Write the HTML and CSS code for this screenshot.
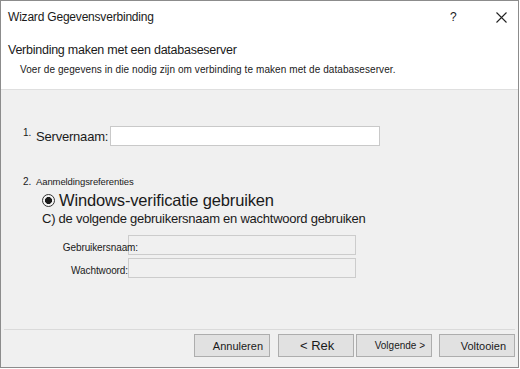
FILE: index.html
```html
<!DOCTYPE html>
<html lang="nl">
<head>
    <meta charset="UTF-8">
    <title>Wizard Gegevensverbinding</title>
    <link rel="stylesheet" href="styles.css">
</head>
<body>
    <div class="dialog">
        <div class="titlebar">
            <span class="title">Wizard Gegevensverbinding</span>
            <span class="help">?</span>
            <span class="close">
                <svg width="11" height="11" viewBox="0 0 11 11"><path d="M0.5 0.5 L10.5 10.5 M10.5 0.5 L0.5 10.5" stroke="#222" stroke-width="1.1" fill="none"/></svg>
            </span>
        </div>
        <div class="header">
            <div class="header-title">Verbinding maken met een databaseserver</div>
            <div class="header-sub">Voer de gegevens in die nodig zijn om verbinding te maken met de databaseserver.</div>
        </div>
        <div class="content">
            <div class="server-row">
                <span class="step">1.</span>
                <label class="server-label">Servernaam:</label>
                <div class="field server-field"></div>
            </div>
            <div class="cred-row">
                <span class="step">2.</span>
                <span class="cred-label">Aanmeldingsreferenties</span>
            </div>
            <div class="radio-row">
                <span class="radio"></span>
                <span class="radio-text">Windows-verificatie gebruiken</span>
            </div>
            <div class="other-row">C) de volgende gebruikersnaam en wachtwoord gebruiken</div>
            <div class="login-grid">
                <span class="login-label user-label">Gebruikersnaam:</span>
                <div class="field disabled"></div>
                <span class="login-label">Wachtwoord:</span>
                <div class="field disabled"></div>
            </div>
        </div>
        <div class="footer">
            <button class="btn btn-cancel">Annuleren</button>
            <button class="btn btn-back">&lt; Rek</button>
            <button class="btn btn-next">Volgende &gt;</button>
            <button class="btn btn-finish">Voltooien</button>
        </div>
    </div>
</body>
</html>
```
FILE: styles.css
```css
body {
    margin: 0;
    background: #ffffff;
    font-family: "Liberation Sans", Arial, sans-serif;
    color: #1a1a1a;
}
.dialog {
    width: 519px;
    height: 368px;
    box-sizing: border-box;
    border: 1px solid #8c8c8c;
    display: flex;
    flex-direction: column;
    background: #f0f0f0;
}
.titlebar {
    height: 31px;
    background: white;
    display: flex;
    align-items: center;
    padding-left: 7px;
    font-size: 12px;
}
.title {
    flex: 1;
    letter-spacing: -0.2px;
}
.help {
    width: 46px;
    font-size: 12px;
}
.close {
    width: 22px;
    display: flex;
    padding-top: 1px;
}
.header {
    height: 57px;
    background: white;
    border-bottom: 1px solid #dfdfdf;
}
.header-title {
    padding: 11px 0 0 7px;
    font-size: 12.5px;
    letter-spacing: -0.25px;
}
.header-sub {
    padding: 7px 0 0 19px;
    font-size: 10px;
    letter-spacing: 0.08px;
}
.content {
    flex: 1;
    padding: 36px 0 0 22px;
}
.step {
    font-size: 10px;
    width: 13px;
    display: inline-block;
}
.server-row {
    display: flex;
    align-items: center;
    height: 20px;
}
.server-row .step {
    align-self: flex-start;
    margin-top: 1px;
}
.server-label {
    font-size: 13px;
    margin-right: 2px;
    letter-spacing: -0.2px;
}
.field {
    height: 20px;
    box-sizing: border-box;
    border: 1px solid #c9c9c9;
    background: white;
}
.server-field {
    width: 270px;
}
.cred-row {
    margin-top: 30px;
    display: flex;
    align-items: baseline;
}
.cred-label {
    font-size: 9.5px;
    letter-spacing: -0.1px;
}
.radio-row {
    display: flex;
    align-items: center;
    margin: 4px 0 0 19px;
    height: 19px;
}
.radio {
    width: 13px;
    height: 13px;
    box-sizing: border-box;
    border: 1px solid #333;
    border-radius: 50%;
    background: radial-gradient(circle, #1a1a1a 0 3.2px, #f4f4f4 3.8px);
    margin-right: 4px;
}
.radio-text {
    font-size: 16.5px;
    letter-spacing: -0.15px;
}
.other-row {
    margin: 1px 0 0 19px;
    font-size: 13px;
    letter-spacing: -0.25px;
}
.login-grid {
    display: grid;
    grid-template-columns: 105px 228px;
    row-gap: 3px;
    margin-top: 9px;
    align-items: center;
}
.login-label {
    font-size: 10px;
    justify-self: end;
    letter-spacing: -0.1px;
    padding-top: 4px;
    position: relative;
    z-index: 1;
}
.user-label {
    margin-right: -10px;
}
.login-grid .field {
    height: 20px;
}
.disabled {
    background: #f0f0f0;
    border-color: #cccccc;
}
.footer {
    height: 33px;
    margin: 0 3px;
    border-top: 1px solid #dadada;
    display: flex;
    justify-content: flex-end;
    align-items: flex-start;
    padding: 4px 0 0 0;
    gap: 2px;
}
.btn {
    height: 23px;
    width: 76px;
    background: #e1e1e1;
    border: 1px solid #adadad;
    font-family: "Liberation Sans", Arial, sans-serif;
    font-size: 11px;
    color: #1a1a1a;
    text-align: right;
    padding: 0 6px 0 0;
}
.btn-cancel {
    margin-right: 6px;
}
.btn-back {
    font-size: 13px;
    text-align: left;
    padding-left: 21px;
}
.btn-next {
    font-size: 10px;
    margin-right: 5px;
}
.btn-finish {
    padding-right: 8px;
}
```
